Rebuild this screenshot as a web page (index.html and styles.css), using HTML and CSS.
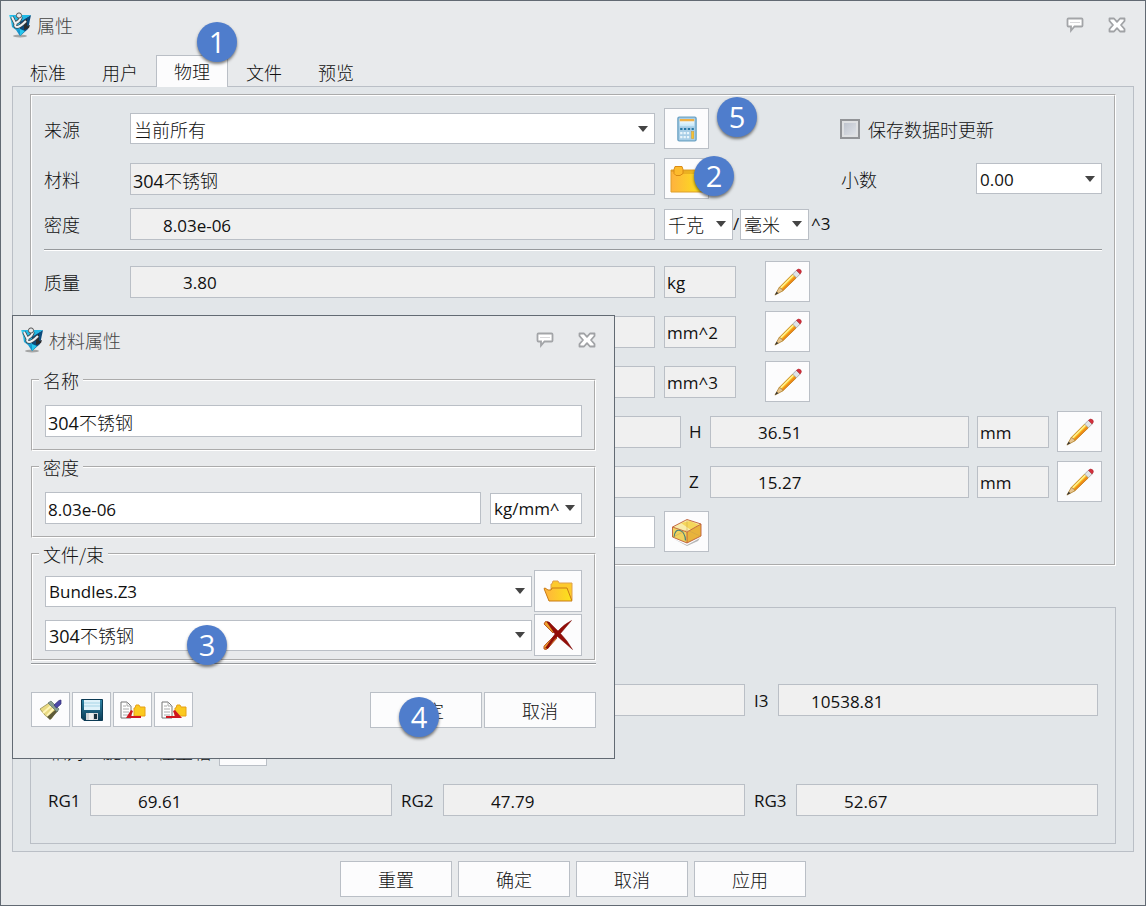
FILE: index.html
```html
<!DOCTYPE html>
<html lang="zh-CN">
<head>
<meta charset="utf-8">
<title>属性</title>
<link rel="stylesheet" href="styles.css">
</head>
<body>
<svg class="sprite" aria-hidden="true">
  <defs>
    <linearGradient id="g-folder" x1="0" y1="0" x2="1" y2="0"><stop offset="0" stop-color="#ffb23e"/><stop offset="1" stop-color="#fbe31a"/></linearGradient>
    <linearGradient id="g-logo" x1="0" y1="0" x2="0" y2="1"><stop offset="0" stop-color="#3fd8f4"/><stop offset="1" stop-color="#0b86c4"/></linearGradient>
    <linearGradient id="g-disk" x1="0" y1="0" x2="0" y2="1"><stop offset="0" stop-color="#2f86a8"/><stop offset="1" stop-color="#0a3a54"/></linearGradient>
    <linearGradient id="g-screen" x1="0" y1="0" x2="0" y2="1"><stop offset="0" stop-color="#ffffff"/><stop offset="1" stop-color="#c4e8f8"/></linearGradient>
  </defs>
  <symbol id="i-logo" viewBox="0 0 24 26">
    <ellipse cx="12" cy="24" rx="7" ry="1.500" fill="#777" opacity=".6"/>
    <path d="M1 3L12 9V24L8 18 4 15 3 9Z" fill="url(#g-logo)"/>
    <path d="M23 3L12 9V24L20 17Z" fill="#0b4a7c"/>
    <path d="M1 3H23L12 10Z" fill="#22b9e6"/>
    <path d="M12 17v7l5-5z" fill="#25c7ee"/>
    <path d="M16 9l3-2v7l3-1-1 3-5 2z" fill="#2a2d30"/>
    <path d="M4 5l4 8M13 5q-1 4-5 6-2 4 1 4 3 0 9-6" fill="none" stroke="#39424a" stroke-width="3.600"/>
    <path d="M4 5l4 8M13 5q-1 4-5 6-2 4 1 4 3 0 9-6" fill="none" stroke="#f0f2f3" stroke-width="2"/>
    <circle cx="11" cy="3.500" r="2.600" fill="#e7e9ea" stroke="#555"/>
  </symbol>
  <symbol id="i-chat" viewBox="0 0 18 16">
    <path d="M2.500 1.500h13q1 0 1 1v6q0 1-1 1H8.500L5 13.500V9.500H2.500q-1 0-1-1v-6q0-1 1-1z" fill="#fff" stroke="#a3a5a8" stroke-width="1.800"/>
    <path d="M4 5.500h10" stroke="#d9d9db"/>
  </symbol>
  <symbol id="i-close" viewBox="0 0 18 16">
    <path d="M1.500 1.500h4.500l3 3.300 3-3.300h4.500v2.500L13 8l3.500 4v2.500H12l-3-3.300-3 3.300H1.500V12L5 8 1.500 4z" fill="#fff" stroke="#a0a2a5" stroke-width="1.800" stroke-linejoin="round"/>
  </symbol>
  <symbol id="i-calc" viewBox="0 0 22 28">
    <rect x="1" y="1" width="20" height="26" rx="1.500" fill="#a7cde6" stroke="#6ba2c4" stroke-width="1.500"/>
    <rect x="3" y="3" width="16" height="8" fill="url(#g-screen)"/>
    <rect x="3" y="3" width="16" height="2.500" fill="#f0b145"/>
    <path d="M3.500 14h15" stroke="#2779a5" stroke-width="2" stroke-dasharray="2.500 1.700"/>
    <path d="M3.500 18.500h10M3.500 23h10" stroke="#e9f5fb" stroke-width="2.500" stroke-dasharray="2.500 1.200"/>
    <rect x="16" y="17" width="2.500" height="7.500" fill="#f7c333" stroke="#d99a1f" stroke-width=".5"/>
  </symbol>
  <symbol id="i-folder" viewBox="0 0 34 28">
    <path d="M1 5h32v22H1z" fill="url(#g-folder)" stroke="#dfa02a"/>
    <path d="M1 6h4M12 6h21M12 8h21" fill="none" stroke="#cf8a12" stroke-width=".8"/>
    <path d="M5 1.500h7l1 3v4l-3 2H6l-2-2v-4z" fill="#fdbb2c" stroke="#d98a14"/>
  </symbol>
  <symbol id="i-open" viewBox="0 0 30 22">
    <path d="M8 10V4h1l1-3h5l1 2h13v17h-4z" fill="#fdca2c" stroke="#dfa04c"/>
    <path d="M1 8.500l1-.500 3 2h3L9 8h15l5 13H6z" fill="url(#g-folder)" stroke="#c97a14"/>
  </symbol>
  <symbol id="i-pencil" viewBox="0 0 30 30">
    <path d="M1 29l4.500-8L20 6.500l4 4L9 25z" fill="#fbc822"/>
    <path d="M8 23L22.500 8.500 24 10.500 9.500 24.500z" fill="#f08a18"/>
    <path d="M6.500 21L20.500 7l1 1L7.500 22z" fill="#fff09a"/>
    <path d="M5.500 21L1 29l8.500-4.500-1.500-2.500z" fill="#e8c48c" stroke="#a98143" stroke-width=".8"/>
    <path d="M1 29l1.800-3.500 2 1.500z" fill="#333"/>
    <path d="M5.500 21L20 6.500m4 4L9.500 24.500" stroke="#b6761c" stroke-width=".8"/>
    <path d="M20 6.500l4-4 4 4-4 4z" fill="#dfe3e6" stroke="#999" stroke-width=".8"/>
    <path d="M24 2.500q2.500-2.500 4.500-.500t-.500 4.500z" fill="#d5303c" stroke="#a92530" stroke-width=".6"/>
  </symbol>
  <symbol id="i-box" viewBox="0 0 32 28">
    <path d="M3 21l13 6 13-7-2 3-11 5z" fill="#999" opacity=".7"/>
    <path d="M1.500 9L16 14v11L1.500 19z" fill="#efd25e"/>
    <path d="M16 14l14-8v12L16 25z" fill="#e8b33c"/>
    <path d="M1.500 9L16 1.500 30 6 16 14z" fill="#f9ecaa"/>
    <path d="M10 5l10 7 8-5-9-4z" fill="#f5d65a"/>
    <path d="M1.500 9L16 14v11L1.500 19zM16 14l14-8v12L16 25M1.500 9L16 1.500 30 6" fill="none" stroke="#bd5c35" stroke-width=".9"/>
    <path d="M3 19q1-8 6-6.500t5.500 10" fill="none" stroke="#467f7b" stroke-width="1.200"/>
    <path d="M2 19l14-7 13 6M16 2v10" fill="none" stroke="#caa04a" stroke-width=".5"/>
  </symbol>
  <symbol id="i-delete" viewBox="0 0 30 30">
    <path d="M1 4q1-4 4-2l7 8-2 3zM1 29q-1-3 2-5l8-8 3 2-8 9q-3 4-5 2z" fill="#f0a22e" stroke="#ac3a12" stroke-width=".8"/>
    <path d="M4 2q2-1 4 2l7 7Q20 5 28.500.500L17.500 13.500Q24 20 29.500 29.500L14.500 16.500Q10 20 5 28.500L2.500 28 12 14z" fill="#930d08" stroke="#7c0b06" stroke-width=".5"/>
  </symbol>
  <symbol id="i-brush" viewBox="0 0 24 22">
    <path d="M1 10l9-6 8 7-6 9q-6-2-11-10z" fill="#e9da82" stroke="#a8a069"/>
    <path d="M4 14l8-7M8 17l7-8" stroke="#fff5b8" stroke-width="2"/>
    <path d="M8 18l3 3 8-9-3-1z" fill="#5e5b38"/>
    <path d="M9 4l3-2 8 8-2 3z" fill="#879d91" stroke="#5c6f64" stroke-width=".7"/>
    <path d="M15 6l5-4.500 2-.500v4l-4.500 4z" fill="#4d49a8" stroke="#322d73" stroke-width=".7"/>
  </symbol>
  <symbol id="i-save" viewBox="0 0 22 22">
    <path d="M.500.500h21v21H3l-2.500-2.500z" fill="url(#g-disk)" stroke="#0b3a54"/>
    <path d="M3 1h16v10H3z" fill="#dff2fa"/>
    <path d="M3 4h16M3 7h16" stroke="#a6d4e6"/>
    <path d="M5 14h12v7H5z" fill="#cfd3d6"/>
    <path d="M8 14h4v7H8z" fill="#eee"/>
    <path d="M13 15h3v5h-3z" fill="#172d3a"/>
  </symbol>
  <symbol id="i-doc" viewBox="0 0 26 18">
    <path d="M1 1h6l4 4v12H1z" fill="#fff" stroke="#777"/>
    <path d="M7 1v4h4M3 5h3M3 8h6M3 11h6M3 14h6" fill="none" stroke="#aaa"/>
    <path d="M14 7h1l1-3h3l1 2h5v9H14z" fill="#fbc91f" stroke="#e6a019"/>
  </symbol>
</svg>

<main class="window">
  <header class="titlebar">
    <svg class="logo"><use href="#i-logo"/></svg>
    <h1 class="title">属性</h1>
    <button class="tool" type="button" aria-label="反馈"><svg><use href="#i-chat"/></svg></button>
    <button class="tool" type="button" aria-label="关闭"><svg><use href="#i-close"/></svg></button>
  </header>

  <nav class="tabs" role="tablist">
    <button class="tab" type="button" role="tab">标准</button>
    <button class="tab" type="button" role="tab">用户</button>
    <button class="tab tab-active" type="button" role="tab" aria-selected="true">物理<span class="badge badge-tab">1</span></button>
    <button class="tab" type="button" role="tab">文件</button>
    <button class="tab" type="button" role="tab">预览</button>
  </nav>

  <section class="panel">
    <div class="group group-main">
      <div class="row">
        <label class="label" for="source">来源</label>
        <select class="select cjk grow" id="source"><option>当前所有</option></select>
        <div class="side">
          <span class="anchor"><button class="icon-btn" type="button" aria-label="计算"><svg class="ic-calc"><use href="#i-calc"/></svg></button><span class="badge badge-calc">5</span></span>
          <label class="check"><input type="checkbox" class="box">保存数据时更新</label>
        </div>
      </div>
      <div class="row">
        <label class="label" for="material">材料</label>
        <input class="field mixed grow" id="material" value="304不锈钢" readonly>
        <div class="side">
          <span class="anchor"><button class="icon-btn" type="button" aria-label="打开材料"><svg class="ic-folder"><use href="#i-folder"/></svg></button><span class="badge badge-folder">2</span></span>
          <label class="decimals" for="decimals">小数</label>
          <select class="select decimals-select" id="decimals"><option>0.00</option></select>
        </div>
      </div>
      <div class="row row-low">
        <label class="label" for="density">密度</label>
        <input class="field grow pad-m" id="density" value="8.03e-06" readonly>
        <div class="side">
          <select class="select cjk unit-select" aria-label="质量单位"><option>千克</option></select>
          <span class="slash">/</span>
          <select class="select cjk unit-select" aria-label="长度单位"><option>毫米</option></select>
          <span class="power">^3</span>
        </div>
      </div>
      <hr class="rule">
      <div class="row">
        <label class="label" for="mass">质量</label>
        <input class="field grow pad-l" id="mass" value="3.80" readonly>
        <div class="side">
          <input class="field unit" value="kg" aria-label="质量单位" readonly>
          <button class="icon-btn edit" type="button" aria-label="编辑质量"><svg class="ic-pencil"><use href="#i-pencil"/></svg></button>
        </div>
      </div>
      <div class="row">
        <span class="label"></span>
        <input class="field grow" aria-label="面积" readonly>
        <div class="side">
          <input class="field unit" value="mm^2" aria-label="面积单位" readonly>
          <button class="icon-btn edit" type="button" aria-label="编辑面积"><svg class="ic-pencil"><use href="#i-pencil"/></svg></button>
        </div>
      </div>
      <div class="row">
        <span class="label"></span>
        <input class="field grow" aria-label="体积" readonly>
        <div class="side">
          <input class="field unit" value="mm^3" aria-label="体积单位" readonly>
          <button class="icon-btn edit" type="button" aria-label="编辑体积"><svg class="ic-pencil"><use href="#i-pencil"/></svg></button>
        </div>
      </div>
      <div class="row axis-row">
        <input class="field" aria-label="长" readonly>
        <input class="field axis-second" aria-label="宽" readonly>
        <label class="axis" for="height">H</label><input class="field pad-xl" id="height" value="36.51" readonly>
        <input class="field unit spaced" value="mm" aria-label="尺寸单位" readonly>
        <button class="icon-btn spaced" type="button" aria-label="编辑尺寸"><svg class="ic-pencil"><use href="#i-pencil"/></svg></button>
      </div>
      <div class="row axis-row">
        <input class="field" aria-label="X" readonly>
        <input class="field axis-second" aria-label="Y" readonly>
        <label class="axis" for="cz">Z</label><input class="field pad-xl" id="cz" value="15.27" readonly>
        <input class="field unit spaced" value="mm" aria-label="重心单位" readonly>
        <button class="icon-btn spaced" type="button" aria-label="编辑重心"><svg class="ic-pencil"><use href="#i-pencil"/></svg></button>
      </div>
      <div class="row">
        <span class="label"></span>
        <input class="field field-white grow" aria-label="毛坯">
        <div class="side">
          <button class="icon-btn" type="button" aria-label="选择毛坯"><svg class="ic-box"><use href="#i-box"/></svg></button>
        </div>
      </div>
    </div>

    <div class="group-inertia">
      <div class="cells">
        <div class="cell"><span class="cell-label"></span><input class="field grow" aria-label="I1" readonly></div>
        <div class="cell"><span class="cell-label"></span><input class="field grow" aria-label="I2" readonly></div>
        <div class="cell"><label class="cell-label" for="i3">I3</label><input class="field grow pad-m" id="i3" value="10538.81" readonly></div>
      </div>
      <div class="relative-row">
        <span class="relative-name">相对</span>
        <span class="relative-value">旋转半径主轴</span>
        <button class="icon-btn wide" type="button" aria-label="选择轴"></button>
      </div>
      <div class="cells">
        <div class="cell"><label class="cell-label cell-label-wide" for="rg1">RG1</label><input class="field grow pad-xl" id="rg1" value="69.61" readonly></div>
        <div class="cell"><label class="cell-label cell-label-wide" for="rg2">RG2</label><input class="field grow pad-xl" id="rg2" value="47.79" readonly></div>
        <div class="cell"><label class="cell-label cell-label-wide" for="rg3">RG3</label><input class="field grow pad-xl" id="rg3" value="52.67" readonly></div>
      </div>
    </div>
  </section>

  <footer class="actions">
    <button class="btn" type="button">重置</button>
    <button class="btn" type="button">确定</button>
    <button class="btn" type="button">取消</button>
    <button class="btn" type="button">应用</button>
  </footer>

  <section class="dialog" role="dialog" aria-labelledby="dlg-title">
    <header class="titlebar dialog-bar">
      <svg class="logo"><use href="#i-logo"/></svg>
      <h2 class="title" id="dlg-title">材料属性</h2>
      <button class="tool" type="button" aria-label="反馈"><svg><use href="#i-chat"/></svg></button>
      <button class="tool" type="button" aria-label="关闭"><svg><use href="#i-close"/></svg></button>
    </header>
    <fieldset class="set">
      <legend>名称</legend>
      <div class="set-row"><input class="field field-white mixed grow" value="304不锈钢" aria-label="名称"></div>
    </fieldset>
    <fieldset class="set">
      <legend>密度</legend>
      <div class="set-row set-row-unit">
        <input class="field field-white grow" value="8.03e-06" aria-label="密度">
        <select class="select density-unit" aria-label="密度单位"><option>kg/mm^3</option></select>
      </div>
    </fieldset>
    <fieldset class="set set-files">
      <legend>文件/束</legend>
      <div class="set-row">
        <select class="select grow" aria-label="文件"><option>Bundles.Z3</option></select>
        <button class="icon-btn wide" type="button" aria-label="打开"><svg class="ic-open"><use href="#i-open"/></svg></button>
      </div>
      <div class="set-row">
        <select class="select mixed grow" aria-label="束"><option>304不锈钢</option></select>
        <button class="icon-btn wide" type="button" aria-label="删除"><svg class="ic-delete"><use href="#i-delete"/></svg></button>
        <span class="badge badge-bundle">3</span>
      </div>
    </fieldset>
    <hr class="rule">
    <div class="dialog-actions">
      <button class="mini" type="button" aria-label="清除"><svg class="ic-brush"><use href="#i-brush"/></svg></button>
      <button class="mini" type="button" aria-label="保存"><svg class="ic-save"><use href="#i-save"/></svg></button>
      <button class="mini" type="button" aria-label="导入"><svg class="ic-doc" viewBox="0 0 26 18"><use href="#i-doc" width="26" height="18"/><path d="M6 17L11 9l2 1-2 5h10v2z" fill="#cf1620"/></svg></button>
      <button class="mini" type="button" aria-label="导出"><svg class="ic-doc" viewBox="0 0 26 18"><use href="#i-doc" width="26" height="18"/><path d="M5 15h9l-2-5 2-1 7 8H5z" fill="#cf1620"/></svg></button>
      <span class="anchor push"><button class="btn" type="button">确定</button><span class="badge badge-ok">4</span></span>
      <button class="btn" type="button">取消</button>
    </div>
  </section>
</main>
</body>
</html>
```

FILE: styles.css
```css
* { box-sizing: border-box; }

body {
  margin: 0;
  background: #e8eaec;
  color: #111;
  font: 300 18px/24px "Noto Sans CJK SC", "Open Sans", sans-serif;
}

button, input, select {
  margin: 0;
  color: inherit;
  font: inherit;
}

.sprite { position: absolute; width: 0; height: 0; }
svg { display: block; }

.window {
  position: relative;
  min-width: 1000px;
  min-height: 100vh;
  padding: 0 11px 8px;
  border: 1px solid #626a73;
  background: #e8eaec;
}

/* Title bars */
.titlebar {
  display: flex;
  align-items: center;
  height: 54px;
  margin-left: -4px;
  padding: 0 8px 6px 0;
}
.logo { width: 24px; height: 26px; margin-right: 5px; }
.title { flex: 1; margin: 0; color: #444; font-size: 18px; font-weight: 300; line-height: 24px; }
.tool { width: 18px; height: 16px; margin-left: 24px; padding: 0; border: 0; background: none; }
.tool svg { width: 18px; height: 16px; }

/* Tabs */
.tabs { display: flex; height: 31px; }
.tab {
  position: relative;
  width: 72px;
  height: 32px;
  padding: 2px 0 0;
  border: 1px solid transparent;
  background: none;
}
.tab-active {
  z-index: 1;
  padding: 0 0 2px;
  border-color: #babfc6;
  border-bottom: 0;
  background: #fcfcfd;
}

/* Panel and groups */
.panel {
  padding: 7px 17px;
  border: 1px solid #babfc6;
  background: #e2e6e9;
}
.group {
  display: flex;
  flex-direction: column;
  gap: 9px;
  padding: 12px;
  border: 2px groove #fff;
}
.group-inertia {
  margin-top: 41px;
  padding: 76px 17px 27px 8px;
  border: 1px solid #babfc6;
}
.row { display: flex; align-items: center; height: 41px; }
.row-low { height: 32px; }
.label { width: 86px; }
.axis-row {
  display: grid;
  grid-template-columns: 1fr 29px 1fr 29px 1fr 80px 53px;
  padding-left: 90px;
}
.axis-row .field { min-width: 0; }
.axis-second { grid-column: 3; }
.axis { padding-left: 8px; }
.side { display: flex; align-items: center; width: 438px; margin-left: 9px; }
.grow { flex: 1; min-width: 0; }
.rule { width: 100%; margin: 0 0 1px; border: 0; border-top: 1px solid #96999c; border-bottom: 1px solid #fff; }

/* Latin text runs a touch smaller than the CJK labels */
.field, .select, .axis, .cell-label, .slash, .power {
  font-family: "Open Sans", "Noto Sans CJK SC", sans-serif;
  font-size: 17px;
  font-weight: 400;
}

.field {
  height: 32px;
  padding: 2px 2px 0;
  border: 1px solid #babfc6;
  border-radius: 0;
  outline: 0;
  background: #f0f0f0;
}
.field-white { background: #fff; }
.pad-m { padding-left: 32px; }
.pad-l { padding-left: 52px; }
.pad-xl { padding-left: 47px; }
.unit { width: 72px; }
.spaced { margin-left: 8px; }
.edit { margin-left: 29px; }

.select {
  height: 31px;
  padding: 2px 19px 0 3px;
  border: 1px solid #babfc6;
  border-radius: 0;
  appearance: none;
  background: #fff url("data:image/svg+xml,%3Csvg xmlns='http://www.w3.org/2000/svg' width='10' height='6'%3E%3Cpath d='M0 0h10L5 6z' fill='%23444'/%3E%3C/svg%3E") no-repeat right 6px center;
}
.cjk { font-size: 18px; font-weight: 300; }
.mixed { font-family: "Open Sans", "Noto Sans CJK SC Light", "Noto Sans CJK SC", sans-serif; font-size: 18px; }
.unit-select { width: 69px; }
.slash { width: 7px; }
.power { padding-left: 2px; }
.decimals { margin-left: 132px; }
.decimals-select { width: 126px; margin-left: auto; }

.icon-btn {
  display: flex;
  align-items: center;
  justify-content: center;
  width: 45px;
  height: 41px;
  padding: 0;
  border: 1px solid #babfc6;
  background: #fcfcfd;
}
.wide { width: 48px; height: 42px; }
.ic-calc { width: 20px; height: 26px; }
.ic-folder { width: 34px; height: 28px; }
.ic-pencil { width: 28px; height: 28px; }
.ic-box { width: 32px; height: 28px; }
.ic-open { width: 30px; height: 22px; }
.ic-delete { width: 30px; height: 30px; }
.ic-brush { width: 24px; height: 22px; }
.ic-save { width: 22px; height: 22px; }
.ic-doc { width: 26px; height: 18px; }

.check { display: flex; align-items: center; gap: 8px; margin-left: 131px; }
.box {
  width: 20px;
  height: 20px;
  margin: 0;
  border: 2px solid #929497;
  appearance: none;
  background: linear-gradient(135deg, #b9bfca, #e4e7eb);
  box-shadow: inset 0 0 0 2px #dfe1e3;
}

/* Inertia rows */
.cells { display: grid; grid-template-columns: repeat(3, 1fr); }
.cell { display: flex; align-items: center; }
.cell-label { width: 33px; padding: 2px 0 0 9px; }
.cell-label-wide { width: 51px; }
.relative-row { display: flex; align-items: center; height: 42px; margin: 8px 0 18px; }
.relative-name { width: 56px; padding: 11px 0 0 10px; white-space: nowrap; }
.relative-value { width: 124px; padding: 11px 0 0 8px; white-space: nowrap; }

/* Buttons */
.actions { display: flex; justify-content: center; gap: 6px; margin-top: 9px; }
.btn {
  width: 112px;
  height: 36px;
  padding: 0;
  border: 1px solid #babfc6;
  background: #fcfcfd;
}
.mini {
  display: flex;
  align-items: center;
  justify-content: center;
  width: 39px;
  height: 35px;
  padding: 0;
  border: 1px solid #babfc6;
  background: #fcfcfd;
}

/* Material dialog */
.dialog {
  position: absolute;
  top: 314px;
  left: 11px;
  z-index: 2;
  width: 603px;
  padding: 0 18px 30px;
  border: 1px solid #626a73;
  background: #e8eaec;
}
.dialog-bar { height: 53px; margin: 0 0 0 -11px; padding: 0 0 5px; }
.set {
  min-width: 0;
  margin: 0 0 5px;
  padding: 14px 12px 12px;
  border: 2px groove #fff;
}
.set legend { margin-left: -6px; padding: 0 4px; line-height: 22px; }
.set-row { position: relative; display: flex; align-items: center; gap: 2px; }
.set-row-unit { gap: 9px; }
.set-row + .set-row { margin-top: 2px; }
.set-files { margin-bottom: 2px; padding: 5px 12px 3px; }
.density-unit { width: 92px; padding-right: 22px; }
.dialog-actions { display: flex; gap: 2px; margin-top: 27px; }
.anchor { position: relative; }
.push { margin-left: auto; }

/* Numbered callouts */
.badge {
  position: absolute;
  z-index: 3;
  width: 40px;
  height: 40px;
  border-radius: 50%;
  background: #4f7dcc;
  box-shadow: 0 2px 3px rgba(0, 0, 0, .5);
  color: #fff;
  font: 400 29px/40px "Open Sans", sans-serif;
  text-align: center;
}
.badge-tab { top: -34px; left: 40px; }
.badge-calc { top: -11px; left: 53px; }
.badge-folder { top: -2px; left: 30px; }
.badge-bundle { top: 11px; left: 142px; }
.badge-ok { top: 5px; left: 29px; }
```
